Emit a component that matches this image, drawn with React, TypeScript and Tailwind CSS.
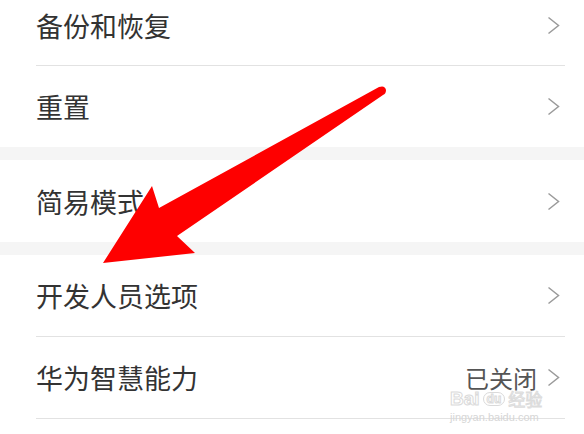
function Chevron() {
  return (
    <svg width="13" height="19" viewBox="0 0 13 19" className="shrink-0">
      <polyline points="1.5,1.5 11.5,9.5 1.5,17.5" fill="none" stroke="#9a9a9a" strokeWidth="1.5" />
    </svg>
  );
}

function Row({ label, value, h = "h-[80px]" }: { label: string; value?: string; h?: string }) {
  return (
    <div className={`flex items-center justify-between pl-[36px] pr-[24px] ${h}`}>
      <span className="text-[27px] leading-none text-[#333]">{label}</span>
      <div className="flex items-center gap-[10px]">
        {value ? <span className="text-[24px] leading-none text-[#555]">{value}</span> : null}
        <Chevron />
      </div>
    </div>
  );
}

function Divider() {
  return <div className="ml-[36px] mr-[19px] h-px bg-[#e2e2e2]" />;
}

function Band() {
  return <div className="h-[13px] bg-[#f5f5f5]" />;
}

export default function App() {
  return (
    <div
      className="relative h-[434px] w-[584px] overflow-hidden bg-white"
      style={{ fontFamily: '"Noto Sans CJK SC", "Noto Sans", sans-serif' }}
    >
      <div className="-mt-[15px]">
        <Row label="备份和恢复" />
        <Divider />
        <Row label="重置" h="h-[81px]" />
        <Band />
        <Row label="简易模式" h="h-[82px]" />
        <Band />
        <Row label="开发人员选项" h="h-[81px]" />
        <Divider />
        <Row label="华为智慧能力" value="已关闭" h="h-[81px]" />
        <Divider />
      </div>

      {/* red arrow */}
      <svg className="pointer-events-none absolute left-0 top-0" width="584" height="434" viewBox="0 0 584 434">
        <path
          d="M103,263 L152,186 L159,208 L379,87 Q385,85 386,90 Q386,94 383,95 L177,236 L195,253 Z"
          fill="#fe0000"
        />
      </svg>

      {/* watermark */}
      <div className="pointer-events-none absolute left-[450px] top-[389px] flex flex-col items-start leading-none">
        <div className="flex items-center gap-[3px]">
          <span className="text-[19px] font-bold text-transparent [-webkit-text-stroke:1px_#dadada]" style={{ fontFamily: '"Liberation Sans", sans-serif' }}>
            Bai
          </span>
          <span className="rounded-full border border-[#dadada] px-[3px] text-[12px] font-bold text-transparent [-webkit-text-stroke:1px_#dadada]" style={{ fontFamily: '"Liberation Sans", sans-serif' }}>
            du
          </span>
          <span className="text-[17px] text-transparent [-webkit-text-stroke:1px_#dcdcdc]">经验</span>
        </div>
        <span className="mt-[4px] text-[11px] text-[#d6d6d6]" style={{ fontFamily: '"Liberation Sans", sans-serif' }}>
          jingyan.baidu.com
        </span>
      </div>
    </div>
  );
}
